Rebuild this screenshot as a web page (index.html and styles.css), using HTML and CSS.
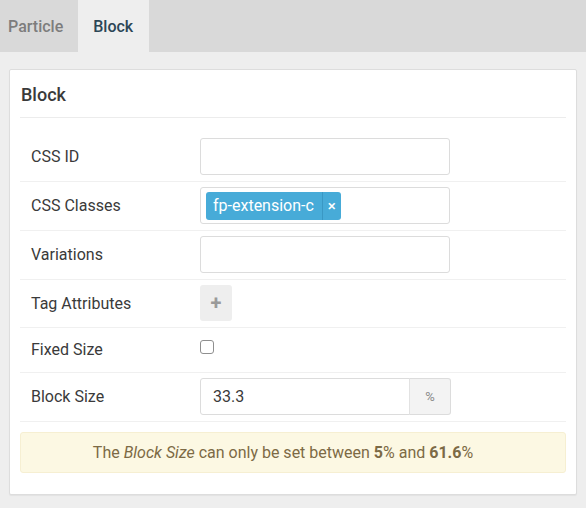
FILE: index.html
```html
<!DOCTYPE html>
<html>
<head>
<meta charset="utf-8">
<link rel="stylesheet" href="styles.css">
</head>
<body>
<div class="tabs">
  <div class="tab tab-first">Particle</div>
  <div class="tab active">Block</div>
</div>
<div class="content">
  <div class="card">
    <div class="card-title">Block</div>
    <div class="fields">
      <div class="row">
        <div class="label">CSS ID</div>
        <div class="input"></div>
      </div>
      <div class="row">
        <div class="label">CSS Classes</div>
        <div class="input tags">
          <span class="chip"><span class="chip-text">fp-extension-c</span><span class="chip-x">×</span></span>
        </div>
      </div>
      <div class="row">
        <div class="label">Variations</div>
        <div class="input"></div>
      </div>
      <div class="row">
        <div class="label">Tag Attributes</div>
        <div class="add-btn">+</div>
      </div>
      <div class="row">
        <div class="label">Fixed Size</div>
        <div class="checkbox"></div>
      </div>
      <div class="row">
        <div class="label">Block Size</div>
        <div class="input-group">
          <div class="input num">33.3</div>
          <div class="addon">%</div>
        </div>
      </div>
    </div>
    <div class="alert"><span>The <em>Block Size</em> can only be set between <strong>5</strong>% and <strong>61.6</strong>%</span></div>
  </div>
</div>
</body>
</html>
```

FILE: styles.css
```css
* { box-sizing: border-box; }
html, body { margin: 0; padding: 0; }
body {
  background: #eeeeee;
  font-family: Roboto, "Liberation Sans", sans-serif;
  width: 586px;
  height: 508px;
  overflow: hidden;
}
.tabs {
  display: flex;
  height: 52px;
  background: #d9d9d9;
}
.tab {
  display: flex;
  align-items: center;
  padding: 0 16px 0 15px;
  font-size: 16px;
  font-weight: 500;
  color: #7d7d7d;
}
.tab-first { padding: 0 15px 0 8px; }
.tab.active {
  background: #eeeeee;
  color: #2c4656;
}
.content {
  padding: 17px 9px 0;
}
.card {
  background: #fff;
  border: 1px solid #dddddd;
  border-radius: 2px;
  box-shadow: 0 1px 1px rgba(0,0,0,0.05);
  padding: 0 10px 21px;
}
.card-title {
  font-size: 18px;
  font-weight: 500;
  color: #3a3a3a;
  line-height: 26px;
  padding: 12px 0 9px 1px;
  border-bottom: 1px solid #ececec;
}
.fields { margin-top: 15px; }
.row {
  display: flex;
  align-items: center;
  padding: 5px 0 6px 11px;
  border-bottom: 1px solid #f0f0f0;
}
.label {
  width: 169px;
  flex: none;
  font-size: 16px;
  color: #3a3a3a;
  line-height: 21px;
  padding: 6px 0;
}
.input {
  width: 250px;
  height: 37px;
  border: 1px solid #dcdcdc;
  border-radius: 3px;
  background: #fff;
}
.tags {
  display: flex;
  align-items: center;
  padding-left: 5px;
}
.chip {
  display: flex;
  align-items: center;
  height: 28px;
  background: #47abd8;
  border-radius: 3px;
  color: #fff;
  font-size: 16px;
}
.chip-text { padding: 0 8px 0 7px; line-height: 28px; }
.chip-x {
  border-left: 1px solid #3a98c4;
  padding: 0 5px 0 5px;
  line-height: 28px;
  font-size: 15px;
  font-weight: 500;
}
.add-btn {
  width: 32px;
  height: 36px;
  background: #eeeeee;
  border-radius: 3px;
  color: #9a9a9a;
  font-size: 20px;
  font-weight: 700;
  display: flex;
  align-items: center;
  justify-content: center;
}
.checkbox {
  width: 14px;
  height: 14px;
  border: 1px solid #8f8f8f;
  border-radius: 3px;
  align-self: flex-start;
  margin-top: 7px;
}
.input-group { display: flex; }
.input.num {
  width: 210px;
  border-radius: 3px 0 0 3px;
  font-size: 16px;
  color: #3a3a3a;
  padding-left: 12px;
  display: flex;
  align-items: center;
}
.addon {
  width: 42px;
  height: 37px;
  background: #f3f3f3;
  border: 1px solid #dcdcdc;
  border-left: 1px solid #e2e2e2;
  border-radius: 0 3px 3px 0;
  margin-left: -1px;
  font-size: 13px;
  color: #8a8a8a;
  display: flex;
  align-items: center;
  justify-content: center;
}
.alert {
  margin-top: 10px;
  height: 41px;
  background: #fcf8e3;
  border: 1px solid #f6efd2;
  border-radius: 3px;
  color: #7c6a45;
  font-size: 16px;
  padding-right: 20px;
  display: flex;
  align-items: center;
  justify-content: center;
}
.alert em { font-style: italic; }
.alert strong { font-weight: 700; }
```
